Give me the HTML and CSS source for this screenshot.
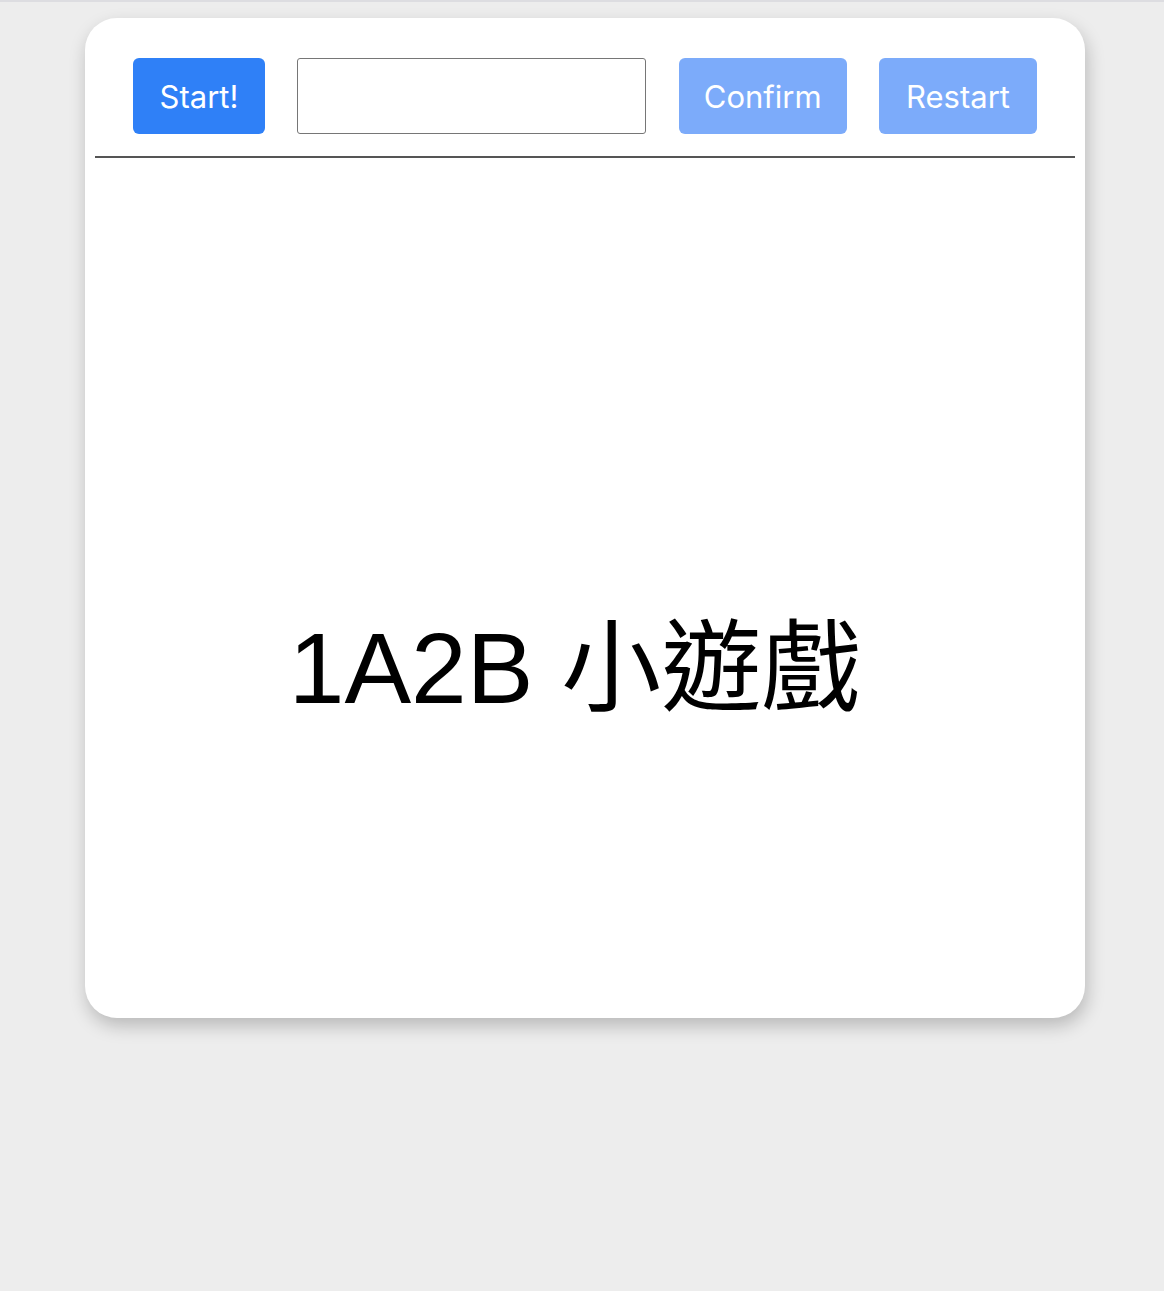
FILE: index.html
```html
<!DOCTYPE html>
<html lang="zh-Hant">
<head>
<meta charset="utf-8">
<title>1A2B 小遊戲</title>
<link rel="stylesheet" href="styles.css">
</head>
<body>
<div class="topline"></div>
<main class="card">
  <div class="toolbar">
    <button class="btn btn-start">Start!</button>
    <input class="guess" type="text">
    <button class="btn btn-confirm" disabled>Confirm</button>
    <button class="btn btn-restart" disabled>Restart</button>
  </div>
  <hr class="divider">
  <section class="stage">
    <h1 class="title">1A2B 小遊戲</h1>
  </section>
</main>
</body>
</html>
```

FILE: styles.css
```css
html, body {
  margin: 0;
  padding: 0;
}
body {
  background: #ededed;
  font-family: Inter, "Liberation Sans", "Noto Sans CJK TC", sans-serif;
  min-height: 1291px;
}
.topline {
  height: 2px;
  background: #dddde1;
}
.card {
  width: 1000px;
  height: 1000px;
  margin: 16px 0 0 85px;
  background: #fff;
  border-radius: 32px;
  box-shadow: 2px 8px 18px rgba(0, 0, 0, 0.22);
  box-sizing: border-box;
  padding: 40px 10px 0;
  display: flex;
  flex-direction: column;
}
.toolbar {
  display: flex;
  justify-content: space-between;
  align-items: stretch;
  padding: 0 38px;
  height: 76px;
}
.btn {
  border: none;
  border-radius: 6px;
  color: #fff;
  font-family: Inter, "Liberation Sans", sans-serif;
  font-size: 31px;
  padding: 0;
  cursor: pointer;
}
.btn-start {
  width: 132px;
  background: #2f80f7;
}
.btn-confirm {
  width: 168px;
  background: #7cabfa;
}
.btn-restart {
  width: 158px;
  background: #7cabfa;
}
.guess {
  width: 349px;
  box-sizing: border-box;
  border: 1px solid #767676;
  border-radius: 3px;
  font-size: 30px;
  padding: 0 8px;
  margin: 0;
}
.divider {
  border: none;
  height: 2px;
  background: #555;
  margin: 22px 0 0;
}
.stage {
  flex: 1;
  display: flex;
  justify-content: center;
  padding: 452px 20px 0 0;
}
.title {
  margin: 0;
  font-family: "Liberation Sans", "Noto Sans CJK TC", sans-serif;
  font-weight: normal;
  font-size: 100px;
  line-height: 116px;
  color: #000;
}
```
